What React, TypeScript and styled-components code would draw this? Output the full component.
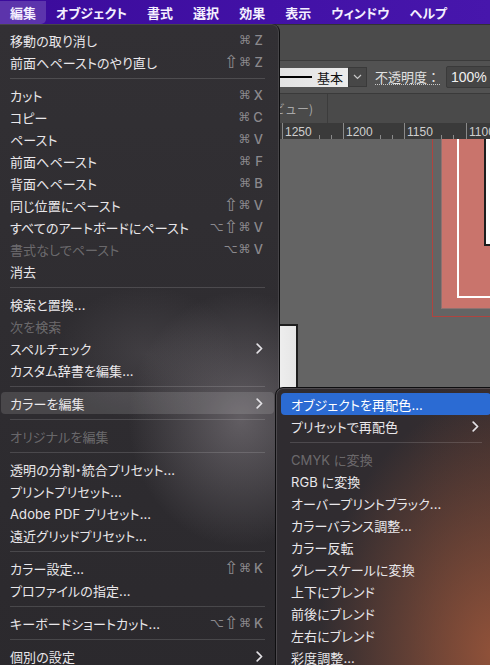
import React from 'react';
import styled, { createGlobalStyle } from 'styled-components';

const GlobalStyle = createGlobalStyle`
  html, body { margin: 0; padding: 0; background: #535353; }
  body { font-family: "Inter", "Noto Sans CJK JP", sans-serif; -webkit-font-smoothing: antialiased; }
  #root { width: 490px; height: 665px; }
`;

const Page = styled.div`
  position: relative;
  width: 490px;
  height: 665px;
  overflow: hidden;
  display: flex;
  flex-direction: column;
  background: #535353;
`;

/* ---------- menu bar ---------- */
const MenuBar = styled.div`
  height: 24px;
  flex: none;
  display: flex;
  align-items: center;
  background: linear-gradient(90deg, #3b0b9b 0%, #4211a6 55%, #4716ac 100%);
`;

const BarItem = styled.div<{ $active?: boolean }>`
  height: 23px;
  display: flex;
  align-items: center;
  padding: 0 10px;
  font-family: "Inter", "Noto Sans CJK JP", sans-serif;
  font-size: 13px;
  font-weight: 700;
  font-feature-settings: "palt";
  color: #f4f0ff;
  border-radius: 0 0 5px 0;
  background: ${p => (p.$active ? 'rgba(255,255,255,0.17)' : 'transparent')};
`;

/* ---------- workspace ---------- */
const Workspace = styled.div`
  flex: 1;
  display: flex;
  flex-direction: column;
  min-height: 0;
`;

const TopStrip = styled.div`
  height: 35px;
  flex: none;
  background: #4b4b4b;
  border-top: 1px solid #333;
  border-bottom: 1px solid #3b3b3b;
`;

const ControlBar = styled.div`
  height: 32px;
  flex: none;
  display: flex;
  align-items: center;
  justify-content: flex-end;
  background: #525252;
  border-bottom: 1px solid #3a3a3a;
  margin-right: -12px;
`;

const StrokePreview = styled.div`
  width: 130px;
  height: 19px;
  display: flex;
  align-items: center;
  justify-content: flex-end;
  gap: 5px;
  padding-right: 5px;
  background: linear-gradient(90deg, #d8d8d8, #ececec);
  font-size: 13px;
  color: #111;
  font-family: "Noto Sans CJK JP", sans-serif;
`;

const StrokeLine = styled.div`
  flex: 1;
  height: 2px;
  background: #000;
`;

const DropButton = styled.div`
  width: 17px;
  height: 18px;
  display: flex;
  align-items: center;
  justify-content: center;
  background: #474747;
  border: 1px solid #3a3a3a;
  margin-right: 8px;
`;

const OpacityLabel = styled.span`
  font-family: "Noto Sans CJK JP", sans-serif;
  font-size: 13px;
  color: #e2e2e2;
  border-bottom: 1px dotted #c8c8c8;
  line-height: 15px;
  margin-right: 6px;
`;

const ValueInput = styled.div`
  width: 50px;
  height: 20px;
  display: flex;
  align-items: center;
  padding-left: 4px;
  background: #454545;
  border: 1px solid #3a3a3a;
  border-radius: 2px;
  font-family: "Liberation Sans", sans-serif;
  font-size: 14px;
  color: #f0f0f0;
`;

const TabRow = styled.div`
  height: 29px;
  flex: none;
  display: flex;
  align-items: stretch;
  background: #4a4a4a;
`;

const Tab = styled.div`
  width: 328px;
  display: flex;
  align-items: center;
  justify-content: flex-end;
  padding-right: 14px;
  box-sizing: border-box;
  border-right: 1px solid #3c3c3c;
  font-family: "Noto Sans CJK JP", sans-serif;
  font-size: 12px;
  color: #a8a8a8;
`;

const Ruler = styled.svg`
  display: block;
  flex: none;
  width: 490px;
  height: 16px;
  background: #3a3a3a;
`;

const Canvas = styled.div`
  position: relative;
  flex: 1;
  background: #646464;
  overflow: hidden;
`;

const Shape = styled.div<{ $l: number; $t: number; $w: number; $h: number }>`
  position: absolute;
  left: ${p => p.$l}px;
  top: ${p => p.$t}px;
  width: ${p => p.$w}px;
  height: ${p => p.$h}px;
  box-sizing: border-box;
`;

const RedOutline = styled(Shape)`
  border: 1px solid #b0443f;
`;
const PinkFill = styled(Shape)`
  background: #c9746c;
  box-shadow: -1px 1px 0 #8e7270;
`;
const WhiteFrame = styled(Shape)`
  border: 2px solid #fff;
`;
const WhiteBox = styled(Shape)`
  background: #fff;
  border: 2px solid #1e1e1e;
`;
const LeftBox = styled(Shape)`
  background: linear-gradient(90deg, #f2f2f2, #e6e6e6);
  border-top: 2px solid #1e1e1e;
  border-right: 2px solid #1e1e1e;
`;

/* ---------- menus ---------- */
const MainMenu = styled.div`
  position: absolute;
  left: -5px;
  top: 24px;
  width: 285px;
  height: 660px;
  box-sizing: border-box;
  padding: 5px 5px 0;
  border: 1px solid #0e0e10;
  border-top: none;
  border-radius: 0 8px 0 0;
  box-shadow: inset 0 0 0 1px rgba(255, 255, 255, 0.1);
  background:
    radial-gradient(ellipse 150px 170px at 245px 395px, rgba(140, 134, 140, 0.55), rgba(140, 134, 140, 0) 75%),
    radial-gradient(ellipse 120px 90px at 150px 330px, rgba(120, 115, 120, 0.25), rgba(120, 115, 120, 0) 75%),
    linear-gradient(180deg, #323034 0%, #2f2d31 45%, #2b292d 100%);
`;

const SubMenu = styled.div`
  position: absolute;
  left: 275px;
  top: 387px;
  width: 222px;
  height: 290px;
  box-sizing: border-box;
  padding: 5px 5px 0;
  border: 1px solid #0e0e10;
  border-radius: 8px 0 0 0;
  box-shadow: inset 0 0 0 1px rgba(255, 255, 255, 0.14);
  background:
    radial-gradient(ellipse 210px 300px at 100% 92%, rgba(150, 84, 58, 0.95), rgba(150, 84, 58, 0) 85%),
    linear-gradient(90deg, #2f2c30 0%, #312c30 60%, #3a2e2f 100%);
`;

const Item = styled.div<{ $hl?: 'grey' | 'blue'; $disabled?: boolean }>`
  height: 22px;
  display: flex;
  align-items: center;
  justify-content: space-between;
  padding: 0 11px 0 9px;
  border-radius: 4px;
  font-family: "Inter", "Noto Sans CJK JP", sans-serif;
  font-size: 13px;
  font-feature-settings: "palt";
  letter-spacing: 0.1px;
  color: ${p => (p.$disabled ? 'rgba(255,255,255,0.3)' : p.$hl === 'blue' ? '#ffffff' : '#e9e7ea')};
  background: ${p =>
    p.$hl === 'blue' ? '#2b6bd3' : p.$hl === 'grey' ? 'rgba(255,255,255,0.13)' : 'transparent'};
`;

const SubItem = styled(Item)`
  padding: 0 12px 0 10px;
`;

const Sep = styled.div`
  height: 11px;
  display: flex;
  align-items: center;
  padding: 0 9px;
  &::after {
    content: '';
    flex: 1;
    height: 1px;
    background: rgba(255, 255, 255, 0.14);
  }
`;

const Shortcut = styled.span`
  display: flex;
  align-items: center;
  height: 22px;
  font-family: "DejaVu Sans", "Liberation Sans", sans-serif;
  color: #8b898d;
`;

const Mod = styled.span<{ $big?: boolean }>`
  display: inline-block;
  width: 14px;
  text-align: center;
  font-size: ${p => (p.$big ? '18px' : '12px')};
  line-height: 16px;
`;

const Key = styled.span`
  display: inline-block;
  min-width: 9px;
  margin-left: 2px;
  text-align: right;
  font-family: "Inter", "Liberation Sans", sans-serif;
  font-size: 13px;
  line-height: 16px;
  font-weight: 500;
`;

const Chevron = () => (
  <svg width="7" height="11" viewBox="0 0 7 11">
    <path d="M1.2 1.2 L5.6 5.5 L1.2 9.8" fill="none" stroke="#e4e2e6" strokeWidth="1.7" strokeLinecap="round" strokeLinejoin="round" />
  </svg>
);

type Entry =
  | { sep: true }
  | { label: string; sc?: string; disabled?: boolean; sub?: boolean; hl?: 'grey' | 'blue'; sep?: false };

const mainEntries: Entry[] = [
  { label: '移動の取り消し', sc: '⌘Z' },
  { label: '前面へペーストのやり直し', sc: '⇧⌘Z' },
  { sep: true },
  { label: 'カット', sc: '⌘X' },
  { label: 'コピー', sc: '⌘C' },
  { label: 'ペースト', sc: '⌘V' },
  { label: '前面へペースト', sc: '⌘F' },
  { label: '背面へペースト', sc: '⌘B' },
  { label: '同じ位置にペースト', sc: '⇧⌘V' },
  { label: 'すべてのアートボードにペースト', sc: '⌥⇧⌘V' },
  { label: '書式なしでペースト', sc: '⌥⌘V', disabled: true },
  { label: '消去' },
  { sep: true },
  { label: '検索と置換...' },
  { label: '次を検索', disabled: true },
  { label: 'スペルチェック', sub: true },
  { label: 'カスタム辞書を編集...' },
  { sep: true },
  { label: 'カラーを編集', sub: true, hl: 'grey' },
  { sep: true },
  { label: 'オリジナルを編集', disabled: true },
  { sep: true },
  { label: '透明の分割・統合プリセット...' },
  { label: 'プリントプリセット...' },
  { label: 'Adobe PDF プリセット...' },
  { label: '遠近グリッドプリセット...' },
  { sep: true },
  { label: 'カラー設定...', sc: '⇧⌘K' },
  { label: 'プロファイルの指定...' },
  { sep: true },
  { label: 'キーボードショートカット...', sc: '⌥⇧⌘K' },
  { sep: true },
  { label: '個別の設定', sub: true },
];

const subEntries: Entry[] = [
  { label: 'オブジェクトを再配色...', hl: 'blue' },
  { label: 'プリセットで再配色', sub: true },
  { sep: true },
  { label: 'CMYK に変換', disabled: true },
  { label: 'RGB に変換' },
  { label: 'オーバープリントブラック...' },
  { label: 'カラーバランス調整...' },
  { label: 'カラー反転' },
  { label: 'グレースケールに変換' },
  { label: '上下にブレンド' },
  { label: '前後にブレンド' },
  { label: '左右にブレンド' },
  { label: '彩度調整...' },
];

const renderShortcut = (sc: string) => {
  const chars = Array.from(sc);
  const key = chars[chars.length - 1];
  const mods = chars.slice(0, -1);
  return (
    <Shortcut>
      {mods.map((m, i) => (
        <Mod key={i} $big={m === '⇧'}>
          {m}
        </Mod>
      ))}
      <Key>{key}</Key>
    </Shortcut>
  );
};

const renderEntries = (entries: Entry[], Row: typeof Item) =>
  entries.map((e, i) => {
    if (e.sep) return <Sep key={i} />;
    return (
      <Row key={i} $hl={e.hl} $disabled={e.disabled}>
        <span>{e.label}</span>
        {e.sc ? renderShortcut(e.sc) : e.sub ? <Chevron /> : null}
      </Row>
    );
  });

const majors = [282, 343, 404, 466];
const labels: Record<number, string> = { 282: '1250', 343: '1200', 404: '1150', 466: '1100' };

export default function App() {
  return (
    <Page>
      <GlobalStyle />
      <MenuBar>
        <BarItem $active>編集</BarItem>
        <BarItem>オブジェクト</BarItem>
        <BarItem>書式</BarItem>
        <BarItem>選択</BarItem>
        <BarItem>効果</BarItem>
        <BarItem>表示</BarItem>
        <BarItem>ウィンドウ</BarItem>
        <BarItem>ヘルプ</BarItem>
      </MenuBar>
      <Workspace>
        <TopStrip />
        <ControlBar>
          <StrokePreview>
            <StrokeLine />
            基本
          </StrokePreview>
          <DropButton>
            <svg width="9" height="6" viewBox="0 0 9 6">
              <path d="M1 1 L4.5 4.5 L8 1" fill="none" stroke="#c8c8c8" strokeWidth="1.2" />
            </svg>
          </DropButton>
          <OpacityLabel>不透明度：</OpacityLabel>
          <ValueInput>100%</ValueInput>
        </ControlBar>
        <TabRow>
          <Tab>ビュー)</Tab>
        </TabRow>
        <Ruler viewBox="0 0 490 16">
          {majors.map(x => (
            <g key={x}>
              <line x1={x + 0.5} y1={0} x2={x + 0.5} y2={16} stroke="#8a8a8a" strokeWidth={1} />
              <line x1={x + 37.5} y1={12} x2={x + 37.5} y2={16} stroke="#8a8a8a" strokeWidth={1} />
              <line x1={x + 49.5} y1={12} x2={x + 49.5} y2={16} stroke="#8a8a8a" strokeWidth={1} />
              <text x={x + 3} y={12.5} fill="#cfcfcf" fontSize="12" fontFamily="Liberation Sans, sans-serif">
                {labels[x]}
              </text>
            </g>
          ))}
        </Ruler>
        <Canvas>
          <RedOutline $l={432} $t={-4} $w={70} $h={182} />
          <PinkFill $l={442} $t={-4} $w={60} $h={173} />
          <WhiteFrame $l={457} $t={-6} $w={50} $h={165} />
          <WhiteBox $l={484} $t={-4} $w={20} $h={111} />
          <LeftBox $l={270} $t={185} $w={28} $h={120} />
        </Canvas>
      </Workspace>
      <MainMenu>{renderEntries(mainEntries, Item)}</MainMenu>
      <SubMenu>{renderEntries(subEntries, SubItem)}</SubMenu>
    </Page>
  );
}
